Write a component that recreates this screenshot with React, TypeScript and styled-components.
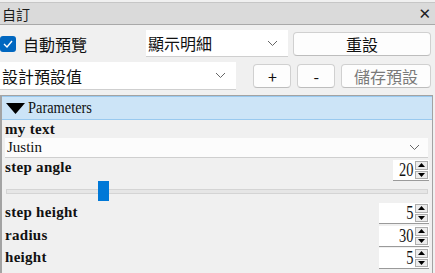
import styled, {createGlobalStyle} from 'styled-components'

const GlobalStyle = createGlobalStyle`
  html, body {
    margin: 0;
    padding: 0;
    background: #f0f0f0;
  }
`

const cjk = `"Noto Sans CJK TC", "Noto Sans", sans-serif`
const serif = `"Liberation Serif", "Noto Sans CJK TC", serif`

const Window = styled.div`
  width: 435px;
  height: 273px;
  background: #f0f0f0;
  overflow: hidden;
  padding-top: 2px;
  box-sizing: border-box;
`

const TitleBar = styled.div`
  height: 21px;
  display: flex;
  align-items: center;
  justify-content: space-between;
  padding: 0 4px 0 2px;
  background: #dadada;
  border-top: 1px solid #c6c6c6;
  border-bottom: 1px solid #a9a9a9;
  font-family: ${cjk};
  font-size: 14px;
  color: #1a1a1a;
`

const Close = styled.span`
  font-family: "DejaVu Sans", sans-serif;
  font-weight: bold;
  font-size: 15px;
  color: #222;
`

const Row = styled.div<{$top: number}>`
  display: flex;
  align-items: center;
  margin-top: ${p => p.$top}px;
  padding-right: 4px;
`

const CheckLabel = styled.label`
  display: flex;
  align-items: center;
  gap: 7px;
  width: 146px;
  font-family: ${cjk};
  font-size: 16px;
  color: #111;
`

const CheckBox = styled.span`
  width: 16px;
  height: 16px;
  border-radius: 3px;
  background: #0067c0;
  display: flex;
  align-items: center;
  justify-content: center;
`

const Select = styled.div<{$w: number; $h: number}>`
  width: ${p => p.$w}px;
  height: ${p => p.$h}px;
  box-sizing: border-box;
  display: flex;
  align-items: center;
  justify-content: space-between;
  background: #ffffff;
  border-bottom: 1px solid #cfcfcf;
  padding: 0 10px 0 2px;
  font-family: ${cjk};
  font-size: 16px;
  color: #111;
`

const Button = styled.div<{$w: number; $gap: number; $disabled?: boolean}>`
  width: ${p => p.$w}px;
  height: 24px;
  margin-left: ${p => p.$gap}px;
  box-sizing: border-box;
  display: flex;
  align-items: center;
  justify-content: center;
  background: #fdfdfd;
  border: 1px solid #d0d0d0;
  border-bottom-color: #bdbdbd;
  border-radius: 4px;
  font-family: ${cjk};
  font-size: 16px;
  color: ${p => (p.$disabled ? '#7a7a7a' : '#111')};
`

const Panel = styled.div`
  margin-top: 5px;
  height: 200px;
  margin-right: 2px;
  border-left: 2px solid #a3a3a3;
  border-right: 1px solid #a3a3a3;
  border-top: 1px solid #a3a3a3;
  box-sizing: border-box;
`

const PanelHeader = styled.div`
  height: 24px;
  box-sizing: border-box;
  display: flex;
  align-items: center;
  gap: 3px;
  padding-left: 4px;
  background: #cce4f7;
  border-top: 1px solid #99c9ef;
  border-bottom: 1px solid #99c9ef;
  font-family: ${serif};
  font-size: 16px;
  color: #111;
`

const HeaderText = styled.span`
  display: inline-block;
  transform: scaleX(0.9);
  transform-origin: left center;
`

const Body = styled.div`
  padding: 2px 4px 0 3px;
`

const Label = styled.div<{$top?: number}>`
  margin-top: ${p => p.$top ?? 0}px;
  font-family: ${serif};
  font-weight: bold;
  font-size: 15px;
  line-height: 15px;
  color: #111;
  letter-spacing: 0.3px;
`

const TextSelect = styled.div`
  margin-top: 1px;
  height: 20px;
  box-sizing: border-box;
  display: flex;
  align-items: center;
  justify-content: space-between;
  background: #fcfcfc;
  border-bottom: 1px solid #cfcfcf;
  padding: 0 8px 0 2px;
  font-family: ${serif};
  font-size: 15px;
  color: #111;
`

const ParamRow = styled.div<{$h: number; $top: number}>`
  display: flex;
  align-items: flex-start;
  justify-content: space-between;
  height: ${p => p.$h}px;
  margin-top: ${p => p.$top}px;
`

const Spin = styled.div<{$w: number}>`
  width: ${p => p.$w}px;
  height: 21px;
  box-sizing: border-box;
  display: flex;
  align-items: stretch;
  background: #fff;
  border-bottom: 1px solid #9a9a9a;
  margin-right: -1px;
`

const SpinValue = styled.div`
  flex: 1;
  text-align: right;
  padding-right: 2px;
  font-family: ${serif};
  font-size: 18px;
  line-height: 21px;
  color: #111;
  transform: scaleX(0.8);
  transform-origin: right center;
`

const Arrows = styled.div`
  width: 13px;
  display: flex;
  flex-direction: column;
  gap: 1px;
  padding: 1px 1px 1px 0;
`

const Arrow = styled.div`
  flex: 1;
  display: flex;
  align-items: center;
  justify-content: center;
  background: #ececec;
  border: 1px solid #adadad;
`

const Slider = styled.div`
  position: relative;
  height: 22px;
`

const Track = styled.div`
  position: absolute;
  left: 1px;
  right: 0;
  top: 8px;
  height: 3px;
  background: #e6e6e6;
  border: 1px solid #d4d4d4;
`

const Thumb = styled.div`
  position: absolute;
  top: 0;
  width: 11px;
  height: 20px;
  background: #0078d7;
`

const Chevron = () => (
  <svg width="11" height="7" viewBox="0 0 11 7">
    <path d="M1 1 L5.5 5.5 L10 1" fill="none" stroke="#666" strokeWidth="1" />
  </svg>
)

const SpinBox = ({value, width}: {value: string; width: number}) => (
  <Spin $w={width}>
    <SpinValue>{value}</SpinValue>
    <Arrows>
      <Arrow>
        <svg width="7" height="4" viewBox="0 0 7 4">
          <path d="M0 4 L3.5 0 L7 4 Z" fill="#000" />
        </svg>
      </Arrow>
      <Arrow>
        <svg width="7" height="4" viewBox="0 0 7 4">
          <path d="M0 0 L3.5 4 L7 0 Z" fill="#000" />
        </svg>
      </Arrow>
    </Arrows>
  </Spin>
)

const App = () => {
  const angle = 20
  const thumbLeft = 93 + (angle - 20) * 4

  return (
    <Window>
      <GlobalStyle />
      <TitleBar>
        <span>自訂</span>
        <Close>✕</Close>
      </TitleBar>

      <Row $top={5}>
        <CheckLabel>
          <CheckBox>
            <svg width="10" height="8" viewBox="0 0 10 8">
              <path d="M1 4 L4 7 L9 1" fill="none" stroke="#fff" strokeWidth="1.4" />
            </svg>
          </CheckBox>
          自動預覽
        </CheckLabel>
        <Select $w={142} $h={27}>
          <span>顯示明細</span>
          <Chevron />
        </Select>
        <Button $w={138} $gap={5}>重設</Button>
      </Row>

      <Row $top={5}>
        <Select $w={237} $h={28}>
          <span>設計預設值</span>
          <Chevron />
        </Select>
        <Button $w={38} $gap={17}>+</Button>
        <Button $w={38} $gap={6}>-</Button>
        <Button $w={90} $gap={6} $disabled>儲存預設</Button>
      </Row>

      <Panel>
        <PanelHeader>
          <svg width="19" height="11" viewBox="0 0 19 11">
            <path d="M0 0 L19 0 L9.5 11 Z" fill="#000" />
          </svg>
          <HeaderText>Parameters</HeaderText>
        </PanelHeader>
        <Body>
          <Label>my text</Label>
          <TextSelect>
            <span>Justin</span>
            <Chevron />
          </TextSelect>
          <ParamRow $h={21} $top={2}>
            <Label>step angle</Label>
            <SpinBox value="20" width={36} />
          </ParamRow>
          <Slider>
            <Track />
            <Thumb style={{left: thumbLeft}} />
          </Slider>
          <ParamRow $h={22} $top={0}>
            <Label $top={2}>step height</Label>
            <SpinBox value="5" width={50} />
          </ParamRow>
          <ParamRow $h={22} $top={1}>
            <Label $top={2}>radius</Label>
            <SpinBox value="30" width={50} />
          </ParamRow>
          <ParamRow $h={22} $top={0}>
            <Label $top={2}>height</Label>
            <SpinBox value="5" width={50} />
          </ParamRow>
        </Body>
      </Panel>
    </Window>
  )
}

export default App
